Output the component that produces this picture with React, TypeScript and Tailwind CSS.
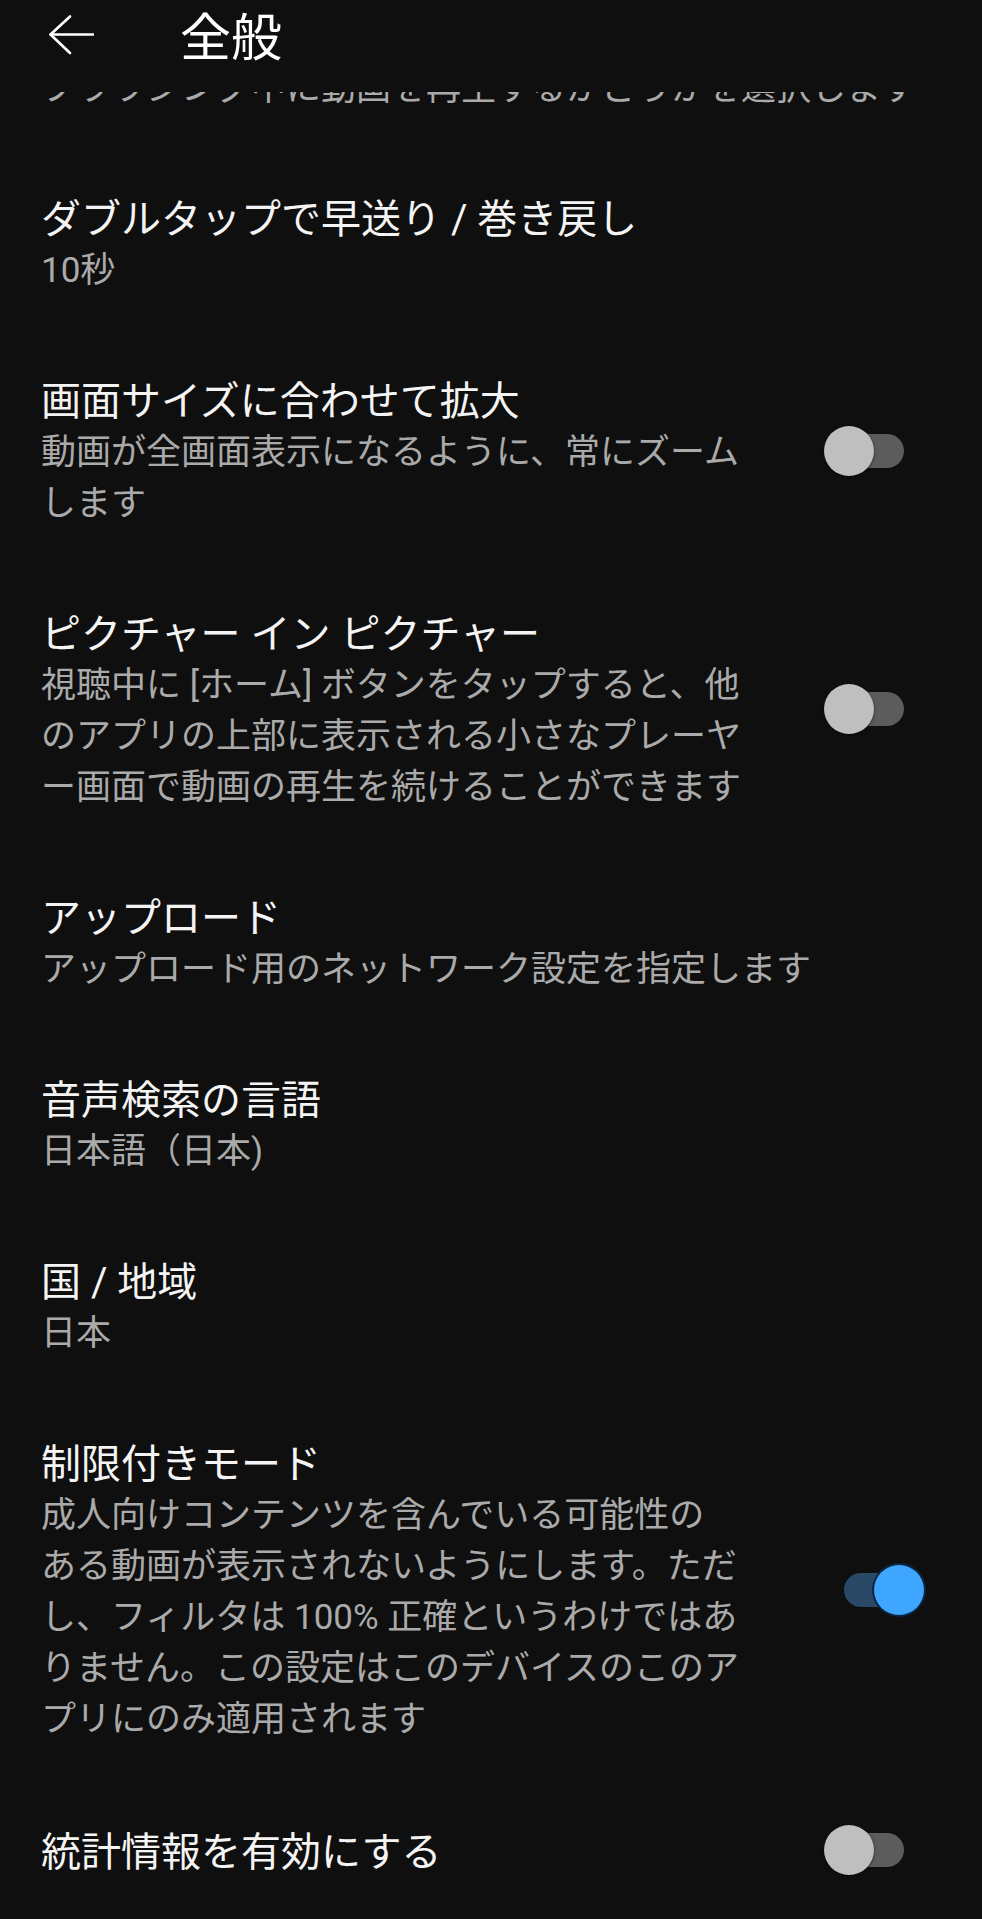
import React from "react";

type Item = {
  title: string;
  desc?: string[];
  toggle?: "on" | "off";
};

const items: Item[] = [
  { title: "ダブルタップで早送り / 巻き戻し", desc: ["10秒"] },
  {
    title: "画面サイズに合わせて拡大",
    desc: ["動画が全画面表示になるように、常にズーム", "します"],
    toggle: "off",
  },
  {
    title: "ピクチャー イン ピクチャー",
    desc: [
      "視聴中に [ホーム] ボタンをタップすると、他",
      "のアプリの上部に表示される小さなプレーヤ",
      "ー画面で動画の再生を続けることができます",
    ],
    toggle: "off",
  },
  { title: "アップロード", desc: ["アップロード用のネットワーク設定を指定します"] },
  { title: "音声検索の言語", desc: ["日本語（日本)"] },
  { title: "国 / 地域", desc: ["日本"] },
  {
    title: "制限付きモード",
    desc: [
      "成人向けコンテンツを含んでいる可能性の",
      "ある動画が表示されないようにします。ただ",
      "し、フィルタは 100% 正確というわけではあ",
      "りません。この設定はこのデバイスのこのア",
      "プリにのみ適用されます",
    ],
    toggle: "on",
  },
  { title: "統計情報を有効にする", toggle: "off" },
];

function Toggle({ on }: { on: boolean }) {
  if (on) {
    return (
      <div className="relative w-[80px] h-[50px] shrink-0 mr-[58px] mb-[4px]">
        <div className="absolute left-0 top-[8px] h-[34px] w-[76px] rounded-full bg-[#2a4966]" />
        <div className="absolute right-0 top-0 h-[50px] w-[50px] rounded-full bg-[#3ea6ff] shadow-[0_0_0_2px_#0b2544]" />
      </div>
    );
  }
  return (
    <div className="relative w-[80px] h-[50px] shrink-0 mr-[78px] mb-[4px]">
      <div className="absolute right-0 top-[8px] h-[34px] w-[76px] rounded-full bg-[#5c5c5c]" />
      <div className="absolute left-0 top-0 h-[50px] w-[50px] rounded-full bg-[#bfbfbf] shadow-[0_1px_3px_rgba(0,0,0,0.6)]" />
    </div>
  );
}

export default function App() {
  const font = {
    fontFamily: 'Roboto, "Noto Sans CJK JP", "Noto Sans", sans-serif',
  };
  return (
    <div
      className="w-[982px] h-[1919px] overflow-hidden bg-[#0f0f0f]"
      style={font}
    >
      {/* Header */}
      <header className="h-[92px] flex items-start bg-[#0f0f0f]">
        <svg
          className="ml-[48px] mt-[14px] shrink-0"
          width="46"
          height="42"
          viewBox="0 0 46 42"
          fill="none"
          stroke="#ffffff"
          strokeWidth="2.6"
          strokeLinecap="round"
          strokeLinejoin="round"
        >
          <path d="M2.5 20.5 H45" />
          <path d="M22 2.5 L2.5 20.5 L22 39" />
        </svg>
        <h1 className="ml-[86px] mt-[13px] text-[51px] leading-[51px] text-white font-normal">
          全般
        </h1>
      </header>

      {/* Partially scrolled-off description */}
      <div className="h-[22px] overflow-hidden flex flex-col justify-end pl-[41px]">
        <p className="shrink-0 h-[51px] text-[35px] leading-[51px] text-[#aaaaaa] whitespace-nowrap">
          ブラウジング中に動画を再生するかどうかを選択します
        </p>
      </div>
      <div className="h-[40px]" />

      {/* Items */}
      <div className="flex flex-col">
        {items.map((it, i) => (
          <div key={i} className="flex items-center py-[40px] pl-[41px]">
            <div className="flex-1 flex flex-col min-w-0">
              <div className="text-[40px] leading-[51px] text-[#f4f4f4] whitespace-nowrap">
                {it.title}
              </div>
              {it.desc?.map((d, j) => (
                <div
                  key={j}
                  className="text-[35px] leading-[51px] text-[#aaaaaa] whitespace-nowrap"
                >
                  {d}
                </div>
              ))}
            </div>
            {it.toggle && <Toggle on={it.toggle === "on"} />}
          </div>
        ))}
      </div>
    </div>
  );
}
